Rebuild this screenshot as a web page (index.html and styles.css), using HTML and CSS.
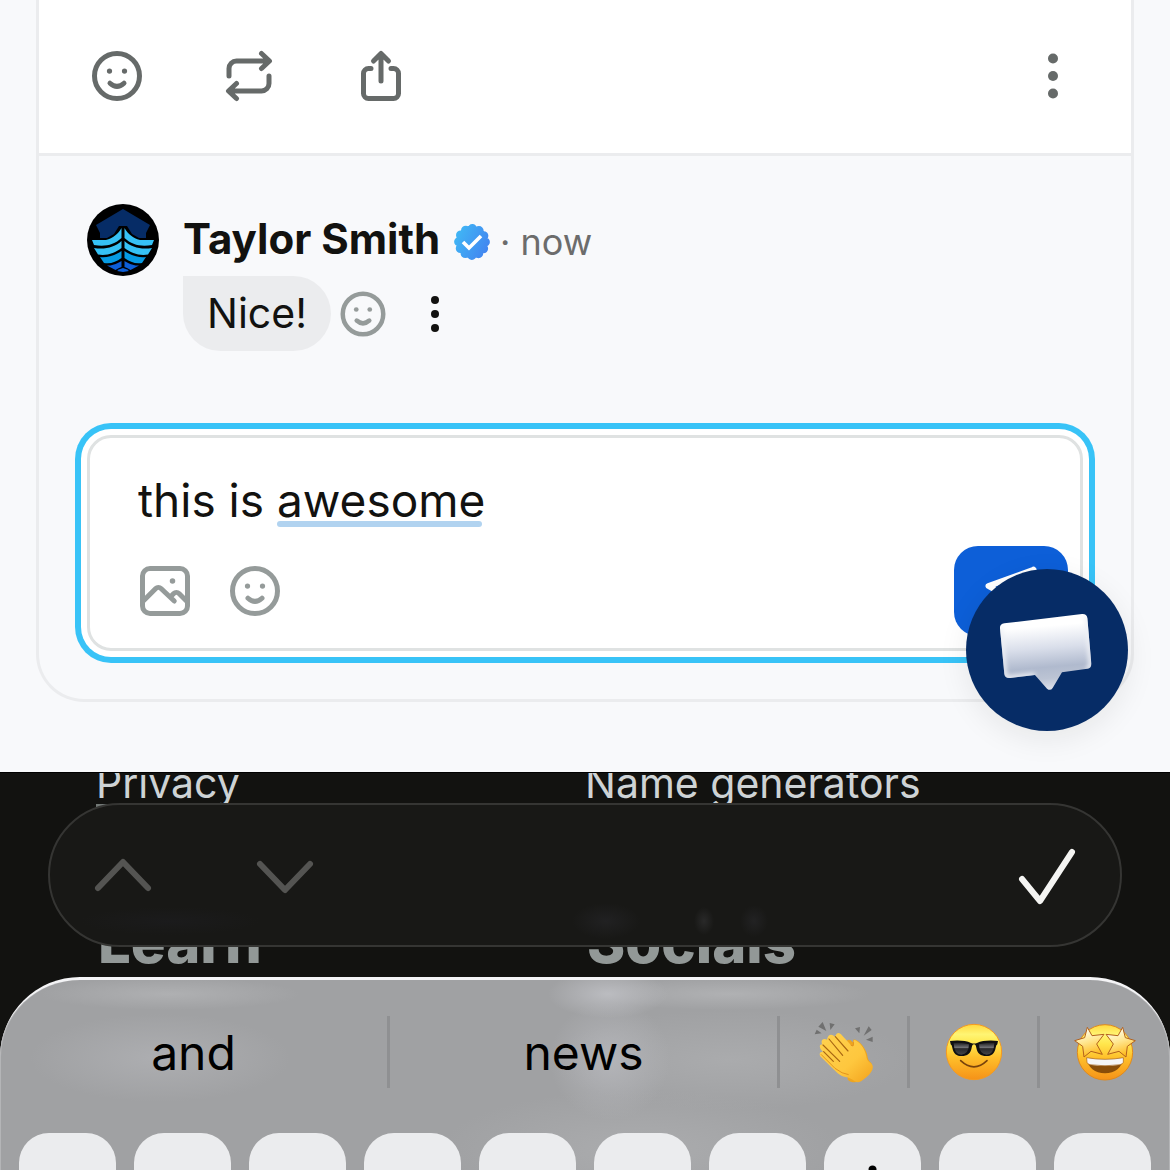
FILE: index.html
```html
<!DOCTYPE html>
<html lang="en">
<head>
  <meta charset="UTF-8">
  <meta name="viewport" content="width=device-width, initial-scale=1.0">
  <title>Comments</title>
  <link rel="stylesheet" href="styles.css">
</head>
<body>
  <svg class="defs" aria-hidden="true">
    <symbol id="smile" viewBox="0 0 24 24">
      <circle cx="12" cy="12" r="9" fill="none" stroke="currentColor" stroke-width="2"/>
      <path d="M9.200 14.900q2.800 2.500 5.600 0" fill="none" stroke="currentColor" stroke-width="2" stroke-linecap="round"/>
      <circle cx="9" cy="10" r="1.050" fill="currentColor"/>
      <circle cx="15" cy="10" r="1.050" fill="currentColor"/>
    </symbol>
    <symbol id="dots" viewBox="0 0 24 24">
      <circle cx="12" cy="5" r="2" fill="currentColor"/>
      <circle cx="12" cy="12" r="2" fill="currentColor"/>
      <circle cx="12" cy="19" r="2" fill="currentColor"/>
    </symbol>
  </svg>
  <div class="screen">
    <main class="feed">
      <article class="card">
        <div class="actions">
          <button type="button" class="icon-btn" aria-label="React"><svg class="icon"><use href="#smile"/></svg></button>
          <button type="button" class="icon-btn" aria-label="Repost">
            <svg class="icon line" viewBox="0 0 24 24"><path d="M4 12V9a3 3 0 0 1 3-3h13M17 3l3.2 3L17 9M20 12v3a3 3 0 0 1-3 3H4M7 15l-3.2 3L7 21"/></svg>
          </button>
          <button type="button" class="icon-btn" aria-label="Share">
            <svg class="icon line" viewBox="0 0 24 24"><path d="M8 9H7a2 2 0 0 0-2 2v8a2 2 0 0 0 2 2h10a2 2 0 0 0 2-2v-8a2 2 0 0 0-2-2h-1M12 14V3.200M9 6l3-3 3 3"/></svg>
          </button>
          <button type="button" class="icon-btn more" aria-label="More"><svg class="icon"><use href="#dots"/></svg></button>
        </div>
        <section class="comments">
          <div class="comment">
            <svg class="avatar" viewBox="0 0 72 72" role="img" aria-label="Taylor Smith">
              <circle cx="36" cy="36" r="36" fill="#000"/>
              <path d="M36 5l27 16-4 8v5H13v-5l-4-8z" fill="#062c66"/>
              <path d="M32 22h8l5 8 7 4h11v8L36 68 9 42v-8h11l7-4z" fill="#000"/>
              <g id="hull">
                <path d="M5 36h14C26 34 31 30 34.500 24v10C27 41 18 43 7 41z" fill="#36c2f6"/>
                <path d="M7 44C18 46 28 43 34.500 37v7C28 49 20 52 11 50.500z" fill="#36c2f6"/>
                <path d="M13 53C21 54 29 51 34.500 47v7C29 58 24 60 17 59z" fill="#069be4"/>
                <path d="M20 61.500C26 62 31 59 34.500 57v6q-3 1-6 3z" fill="#0d5fd8"/>
                <path d="M30 67q2-2 6-3v4z" fill="#0d5fd8"/>
              </g>
              <use href="#hull" transform="matrix(-1 0 0 1 72 0)"/>
            </svg>
            <div class="comment-body">
              <div class="byline">
                <strong class="name">Taylor Smith</strong>
                <svg class="badge" viewBox="0 0 36 36" role="img" aria-label="Verified">
                  <defs>
                    <linearGradient id="blue" gradientUnits="userSpaceOnUse" x1="2" y1="10" x2="34" y2="26">
                      <stop offset="0" stop-color="#40b6f5"/>
                      <stop offset="1" stop-color="#4285f0"/>
                    </linearGradient>
                  </defs>
                  <circle cx="18" cy="18" r="15" fill="url(#blue)"/>
                  <circle cx="18" cy="18" r="13.200" fill="none" stroke="url(#blue)" stroke-width="9.400" stroke-linecap="round" stroke-dasharray="0 6.911"/>
                  <path d="M9 18l6 6 12-12" fill="none" stroke="#fff" stroke-width="3.600"/>
                </svg>
                <span class="time">· now</span>
              </div>
              <div class="message">
                <p class="bubble">Nice!</p>
                <button type="button" class="icon-btn react" aria-label="React"><svg class="icon-md"><use href="#smile"/></svg></button>
                <button type="button" class="icon-btn options" aria-label="Options"><svg class="icon-sm"><use href="#dots"/></svg></button>
              </div>
            </div>
          </div>
          <form class="composer">
            <div class="field">
              <textarea rows="1" spellcheck="false" aria-label="Write a comment">this is awesome</textarea>
              <span class="suggest"></span>
            </div>
            <div class="tools">
              <button type="button" class="icon-btn" aria-label="Add image">
                <svg class="icon line" viewBox="0 0 24 24">
                  <rect x="3" y="3" width="18" height="18" rx="3"/>
                  <path d="M3.500 15.800l4.800-4.800a1.500 1.500 0 0 1 2.100 0l5.300 5M14.200 14.300l1.300-1.300a1.500 1.500 0 0 1 2.100 0l3 3"/>
                  <circle class="sun" cx="15" cy="8" r="1.100"/>
                </svg>
              </button>
              <button type="button" class="icon-btn" aria-label="Add emoji"><svg class="icon"><use href="#smile"/></svg></button>
              <button type="submit" class="send" aria-label="Send">
                <svg class="icon" viewBox="0 0 24 24"><path d="M21 3.500L3 10l7 4 4 7zM10 14l11-10.500" fill="none" stroke="#fff" stroke-width="2.400" stroke-linecap="round" stroke-linejoin="round"/></svg>
              </button>
            </div>
          </form>
        </section>
      </article>
      <button type="button" class="chat" aria-label="Open chat">
        <svg viewBox="231 240 300 300">
          <defs>
            <linearGradient id="fade" x1="0.45" y1="0" x2="0.550" y2="1">
              <stop offset="0.16" stop-color="#fff"/>
              <stop offset="0.450" stop-color="#d9deea"/>
              <stop offset="0.700" stop-color="#b0bace"/>
              <stop offset="0.85" stop-color="#bcc4d4"/>
              <stop offset="1" stop-color="#dfe2ea"/>
            </linearGradient>
            <filter id="soft" x="-10%" y="-10%" width="120%" height="120%"><feGaussianBlur stdDeviation="7"/></filter>
            <clipPath id="speech"><path d="M253 310l233-28q14-1 16 12l12 137q0 13-12 15l-76 11-28 47q-7 10-17 2l-36-41-74 9q-16 2-18-12l-13-137q-1-13 13-15z"/></clipPath>
          </defs>
          <path d="M253 310l233-28q14-1 16 12l12 137q0 13-12 15l-76 11-28 47q-7 10-17 2l-36-41-74 9q-16 2-18-12l-13-137q-1-13 13-15z" fill="url(#fade)"/>
          <g clip-path="url(#speech)"><path d="M242 322l13 137q1 15 16 14l74-8M500 290l12 141q0 13-12 15" fill="none" stroke="#eef0f5" stroke-width="12" filter="url(#soft)"/></g>
        </svg>
      </button>
    </main>

    <footer class="footer">
      <div class="links">
        <div class="column">
          <a href="#privacy">Privacy</a>
          <h2>Learn</h2>
        </div>
        <div class="column">
          <a href="#name-generators">Name generators</a>
          <h2>Socials</h2>
        </div>
      </div>
      <div class="form-bar">
        <button type="button" class="icon-btn" aria-label="Previous field"><svg class="icon arrow" viewBox="0 0 60 60"><path d="M5 43l25-26 25 26"/></svg></button>
        <button type="button" class="icon-btn" aria-label="Next field"><svg class="icon arrow" viewBox="0 0 60 60"><path d="M5 19l25 26 25-26"/></svg></button>
        <button type="button" class="icon-btn done" aria-label="Done"><svg class="icon arrow" viewBox="0 0 60 60"><path d="M5 34l18 22L55 7"/></svg></button>
      </div>
    </footer>

    <section class="keyboard" aria-label="Keyboard">
      <div class="predictions">
        <button type="button">and</button>
        <button type="button">news</button>
        <button type="button" aria-label="Clapping hands">
          <svg width="60" height="63" viewBox="100 60 180 189">
            <defs>
              <linearGradient id="hand" x1="0" y1="0" x2="1" y2="1">
                <stop offset="0" stop-color="#ffd250"/>
                <stop offset="0.600" stop-color="#fec73e"/>
                <stop offset="1" stop-color="#f3a21c"/>
              </linearGradient>
            </defs>
            <path d="M102 100l6-14 15 11zM113 77l13-14 11 27zM147 66l15 4-13 17zM223 82l15-4-2 19zM249 104l15-28 9 11zM256 116l20-9v16z" fill="#707070"/>
            <path d="M197 122q2-8 12-5l10 9q-6-13 6-10c12 6 28 22 34 43 3 14 2 18 12 26 8 10 3 24-14 38-18 12-25 22-41 21q-8-1-15-8z" fill="#eea51f"/>
            <path d="M168 98c6-5 12 0 15 4l27 29c8 8 13 6 8-9q1-8 9-3c17 11 26 28 30 47 2 13 5 14 15 22 9 9 4 24-14 40-18 14-24 20-36 13-10-8-16-11-28-13-17-4-25-14-40-28l-32-31c-10-10-3-19 6-16-13-10-14-23-3-23-7-11 3-20 14-14 4-18 15-17 23-9z" fill="url(#hand)"/>
            <path d="M164 107l38 43M145 114l41 49M127 132l50 49M129 152l29 29" fill="none" stroke="#a86512" stroke-width="3.500" stroke-linecap="round"/>
            <path d="M121 160l42 42q22 17 41 19M218 122q2 18-8 10" fill="none" stroke="#e39420" stroke-width="3"/>
          </svg>
        </button>
        <button type="button" aria-label="Smiling face with sunglasses">
          <svg width="60" height="60" viewBox="492 66 180 180">
            <defs>
              <linearGradient id="face" x1="0" y1="0" x2="0" y2="1">
                <stop offset="0" stop-color="#ffd83f"/>
                <stop offset="0.180" stop-color="#fff573"/>
                <stop offset="0.350" stop-color="#ffe64c"/>
                <stop offset="0.600" stop-color="#ffbf2a"/>
                <stop offset="1" stop-color="#f59218"/>
              </linearGradient>
              <linearGradient id="lens" x1="0" y1="0" x2="0" y2="1">
                <stop offset="0" stop-color="#1d1d20"/>
                <stop offset="0.400" stop-color="#707074"/>
                <stop offset="0.500" stop-color="#28282b"/>
                <stop offset="1" stop-color="#454548"/>
              </linearGradient>
            </defs>
            <circle cx="582" cy="156" r="83" fill="url(#face)" stroke="#f59a20" stroke-width="3"/>
            <path d="M510 123q40-4 63 6 9 3 18 0 23-10 63-6l-2 10q-4 2-5 10c-3 18-13 25-28 25-17 0-27-8-30-25q-2-10-7-10t-7 10c-3 17-13 25-30 25-15 0-25-7-28-25q-1-8-5-10z" fill="#101012"/>
            <path d="M521 129q25-3 46 4-1 30-23 31-22 0-23-35zM643 129q-25-3-46 4 1 30 23 31 22 0 23-35z" fill="url(#lens)"/>
            <path d="M542 182q40 37 79 0" fill="none" stroke="#79430c" stroke-width="5" stroke-linecap="round"/>
          </svg>
        </button>
        <button type="button" aria-label="Star-struck">
          <svg width="64" height="60" viewBox="876 62 192 180">
            <defs>
              <linearGradient id="star" x1="0" y1="0" x2="0.300" y2="1">
                <stop offset="0.200" stop-color="#fffbe0"/>
                <stop offset="0.550" stop-color="#ffe792"/>
                <stop offset="1" stop-color="#ffbe25"/>
              </linearGradient>
            </defs>
            <circle cx="972" cy="153" r="83" fill="url(#face)" stroke="#e08a1c" stroke-width="3"/>
            <path d="M917 170q55 10 110 0c-3 28-25 46-55 46s-52-18-55-46z" fill="#894d09"/>
            <path d="M917 169q55 10 110 0v14q-3 6-10 7-45 7-90 0-7-1-9-7z" fill="#f5f5f7" stroke="#a4631c" stroke-width="2"/>
            <g fill="url(#star)" stroke="#b3611d" stroke-width="3" stroke-linejoin="round">
              <path d="M919 78l14 25 36-4-22 29 17 31-34-9-21 17-4-32-24-17 30-9z"/>
              <path d="M1025 78l-14 25-36-4 22 29-17 31 34-9 21 17 4-32 24-17-30-9z"/>
            </g>
          </svg>
        </button>
      </div>
      <div class="keys">
        <button type="button">q</button>
        <button type="button">w</button>
        <button type="button">e</button>
        <button type="button">r</button>
        <button type="button">t</button>
        <button type="button">y</button>
        <button type="button">u</button>
        <button type="button">i</button>
        <button type="button">o</button>
        <button type="button">p</button>
      </div>
    </section>
  </div>
</body>
</html>
```
FILE: styles.css
```css
* {
  box-sizing: border-box;
}
body {
  margin: 0;
  font-family: Inter, "Liberation Sans", sans-serif;
  color: #121210;
  background: #121210;
}
button {
  padding: 0;
  border: none;
  background: none;
  color: inherit;
  font: inherit;
  cursor: pointer;
}
svg {
  display: block;
}
.defs {
  display: none;
}
.screen {
  height: 100vh;
  overflow: hidden;
}
.icon {
  width: 60px;
  height: 60px;
}
.icon-md {
  width: 54px;
  height: 54px;
}
.icon-sm {
  width: 48px;
  height: 48px;
}
.line {
  fill: none;
  stroke: currentColor;
  stroke-width: 2;
  stroke-linecap: round;
  stroke-linejoin: round;
}
.sun {
  fill: currentColor;
  stroke: none;
}

/* post card */
.feed {
  position: relative;
  padding: 0 36px 70px;
  background: #f8f9fb;
}
.card {
  border: 3px solid #ebecee;
  border-top: none;
  border-radius: 0 0 48px 48px;
}
.actions {
  display: flex;
  align-items: center;
  gap: 72px;
  padding: 46px 48px 47px;
  border-bottom: 3px solid #ebecee;
  background: #fff;
  color: #666a69;
}
.more {
  margin-left: auto;
}
.comments {
  padding: 48px;
}
.comment {
  display: flex;
  gap: 24px;
}
.avatar {
  width: 72px;
  height: 72px;
}
.byline {
  display: flex;
  align-items: center;
  height: 72px;
}
.name {
  padding-bottom: 3px;
  font-size: 42px;
  font-weight: 700;
}
.badge {
  width: 36px;
  height: 36px;
  margin: 4px 10px 0 14px;
}
.time {
  margin-top: 4px;
  font-size: 36px;
  color: #6c6c6c;
}
.message {
  display: flex;
  align-items: center;
}
.bubble {
  margin: 0;
  padding: 0 24px;
  border-radius: 0 38px 38px 38px;
  background: #ebecee;
  font-size: 41px;
  line-height: 75px;
}
.react {
  margin: 0 21px 0 5px;
  color: #959b9a;
}

/* comment box */
.composer {
  margin-top: 84px;
  border: 3px solid #dfe2e2;
  border-radius: 24px;
  background: #fff;
  box-shadow: 0 0 0 6px #fff, 0 0 0 12px #38c3f7;
}
.field {
  position: relative;
  padding: 29px 48px 13px;
}
.field textarea {
  display: block;
  width: 100%;
  height: 66px;
  padding: 0;
  border: none;
  outline: none;
  background: none;
  color: inherit;
  font: inherit;
  font-size: 46px;
  line-height: 66px;
  resize: none;
  overflow: hidden;
}
.suggest {
  position: absolute;
  left: 187px;
  top: 83px;
  width: 205px;
  height: 6px;
  border-radius: 3px;
  background: #b1d3f0;
}
.tools {
  display: flex;
  align-items: center;
  gap: 30px;
  padding: 0 12px 12px 45px;
  color: #959b9a;
}
.send {
  display: flex;
  align-items: center;
  justify-content: center;
  width: 114px;
  height: 90px;
  margin-left: auto;
  border-radius: 24px;
  background: #0d5fd8;
}
.chat {
  position: absolute;
  right: 42px;
  bottom: 41px;
  display: flex;
  align-items: center;
  justify-content: center;
  width: 162px;
  height: 162px;
  border-radius: 50%;
  background: #062c66;
  box-shadow: 0 8px 30px rgba(20, 20, 0, 0.08);
}
.chat svg {
  width: 100px;
  height: 100px;
}

/* page footer behind the form bar */
.footer {
  position: relative;
  height: 205px;
  overflow: hidden;
  border-top: 1px solid #000;
}
.links {
  display: grid;
  grid-template-columns: 1fr 1fr;
  margin-top: -11px;
  padding: 0 96px;
}
.links a {
  display: inline-block;
  border-bottom: 3px solid #727876;
  color: #ced3d5;
  font-size: 41px;
  line-height: 42px;
  text-decoration: none;
}
.links h2 {
  margin: 102px 0 0;
  padding-left: 2px;
  color: #929897;
  font-size: 58px;
  font-weight: 800;
  line-height: 66px;
}
.form-bar {
  position: absolute;
  top: 30px;
  left: 48px;
  right: 48px;
  display: flex;
  align-items: center;
  gap: 102px;
  height: 144px;
  padding: 0 43px;
  border: 2px solid #353533;
  border-radius: 72px;
  background:
    radial-gradient(ellipse 34px 18px at 556px 116px, #212122, transparent),
    radial-gradient(ellipse 10px 14px at 654px 116px, #292929, transparent),
    radial-gradient(ellipse 14px 16px at 704px 116px, #222223, transparent),
    radial-gradient(ellipse 90px 14px at 120px 116px, #1b1b1c, transparent),
    #181816;
  color: #545452;
}
.arrow {
  fill: none;
  stroke: currentColor;
  stroke-width: 6;
  stroke-linecap: round;
  stroke-linejoin: round;
}
.done {
  margin-left: auto;
  color: #f4f4f2;
}

/* keyboard */
.keyboard {
  border-top: 3px solid #f4f4f6;
  border-radius: 80px 80px 0 0;
  background:
    radial-gradient(ellipse 60px 24px at 608px 14px, #bbbcc0, transparent),
    radial-gradient(ellipse 140px 16px at 730px 14px, #b0b1b3, transparent),
    radial-gradient(ellipse 130px 16px at 170px 14px, #afb0b2, transparent),
    radial-gradient(ellipse 60px 60px at 610px 80px, #b3b4b8, transparent),
    radial-gradient(ellipse 180px 50px at 730px 80px, #aaabad, transparent),
    radial-gradient(ellipse 130px 44px at 160px 78px, #adaeb1, transparent),
    radial-gradient(ellipse 200px 60px at 640px 170px, #abacae, transparent),
    #a0a1a3;
  box-shadow: inset 1px 0 #b4b5b7, inset -1px 0 #b4b5b7;
  color: #000;
}
.predictions {
  display: grid;
  grid-template-columns: 3fr 3fr 1fr 1fr 1fr;
  padding-top: 36px;
}
.predictions button {
  display: flex;
  align-items: center;
  justify-content: center;
  height: 72px;
  border-right: 3px solid #8f9092;
  font-size: 48px;
}
.predictions button:last-child {
  border-right: none;
}
.keys {
  display: grid;
  grid-template-columns: repeat(10, 1fr);
  gap: 18px;
  padding: 45px 19px 0;
}
.keys button {
  height: 116px;
  border-radius: 30px;
  background: #ebecee;
  font-size: 66px;
}
```
